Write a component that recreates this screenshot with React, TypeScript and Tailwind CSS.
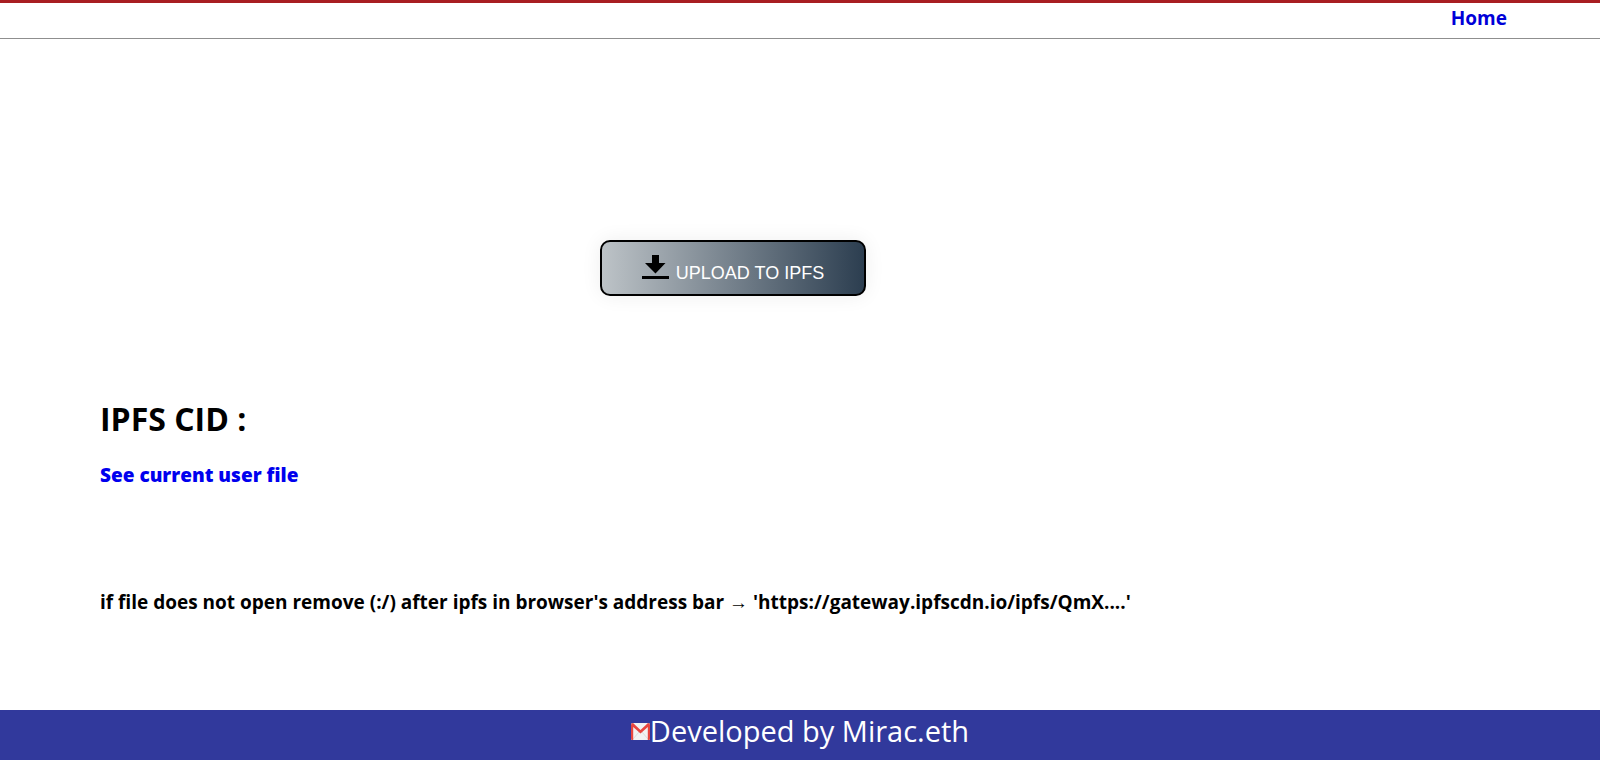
function DownloadIcon() {
  return (
    <svg aria-hidden="true" viewBox="0 0 27 24" className="mb-0.5 h-6 w-[27px] shrink-0" fill="#000">
      <path d="M10 0h7v8h6.500L13.500 18.500 3 8H10z" />
      <path d="M0 21h27v3H0z" />
    </svg>
  );
}

function MailIcon() {
  return (
    <svg aria-hidden="true" viewBox="0 0 19 17" className="h-[17px] w-[19px] shrink-0">
      <rect width="19" height="17" rx="1.500" fill="#f2f2f2" />
      <path d="M2 16l6-7M17 16l-6-7" stroke="#dcdcdc" strokeWidth="1" fill="none" />
      <path d="M0 2v13.500Q0 17 1.500 17H2.200V4L9.500 10.500 16.800 4V17H17.500Q19 17 19 15.500V2Q19 0 17 0L9.500 7 2 0Q0 0 0 2z" fill="#e8453f" />
    </svg>
  );
}

export default function App() {
  return (
    <div className="flex min-h-screen flex-col bg-white font-['Open_Sans','Noto_Sans',sans-serif] text-black">
      <header className="flex h-[39px] items-start justify-end border-t-[3px] border-b border-t-[#a81e22] border-b-[#8f8f8f] pt-[3px] pr-[93px]">
        <nav className="flex">
          <a href="#home" className="text-[19px] leading-6 font-bold text-[#0000d8]">Home</a>
        </nav>
      </header>
      <main className="flex flex-1 flex-col items-start px-[100px]">
        <div className="mt-[201px] w-full pr-[134px] text-center">
          <button
            type="button"
            className="inline-flex h-14 w-[266px] items-center justify-center gap-[7px] rounded-[10px] border-2 border-black bg-linear-to-r/srgb from-[#bdc3c7] to-[#2c3e50] font-['Liberation_Sans',Arial,sans-serif] text-lg text-white shadow-[0_0_20px_#eeeeee]"
          >
            <DownloadIcon />
            <span className="pt-2.5">UPLOAD TO IPFS</span>
          </button>
        </div>
        <h1 className="mt-[101px] text-[32px] leading-[44px] font-bold">IPFS CID :</h1>
        <a href="#file" className="mt-5 text-[19px] leading-7 font-extrabold text-[#0000ee]">See current user file</a>
        <p className="mt-[99px] text-[19px] leading-7 font-bold">
          if file does not open remove (:/) after ipfs in browser's address bar → 'https://gateway.ipfscdn.io/ipfs/QmX....'
        </p>
      </main>
      <footer className="flex h-[50px] items-center justify-center bg-[#31399c] pb-2">
        <MailIcon />
        <span className="text-[29px] leading-10 text-white">Developed by Mirac.eth</span>
      </footer>
    </div>
  );
}
